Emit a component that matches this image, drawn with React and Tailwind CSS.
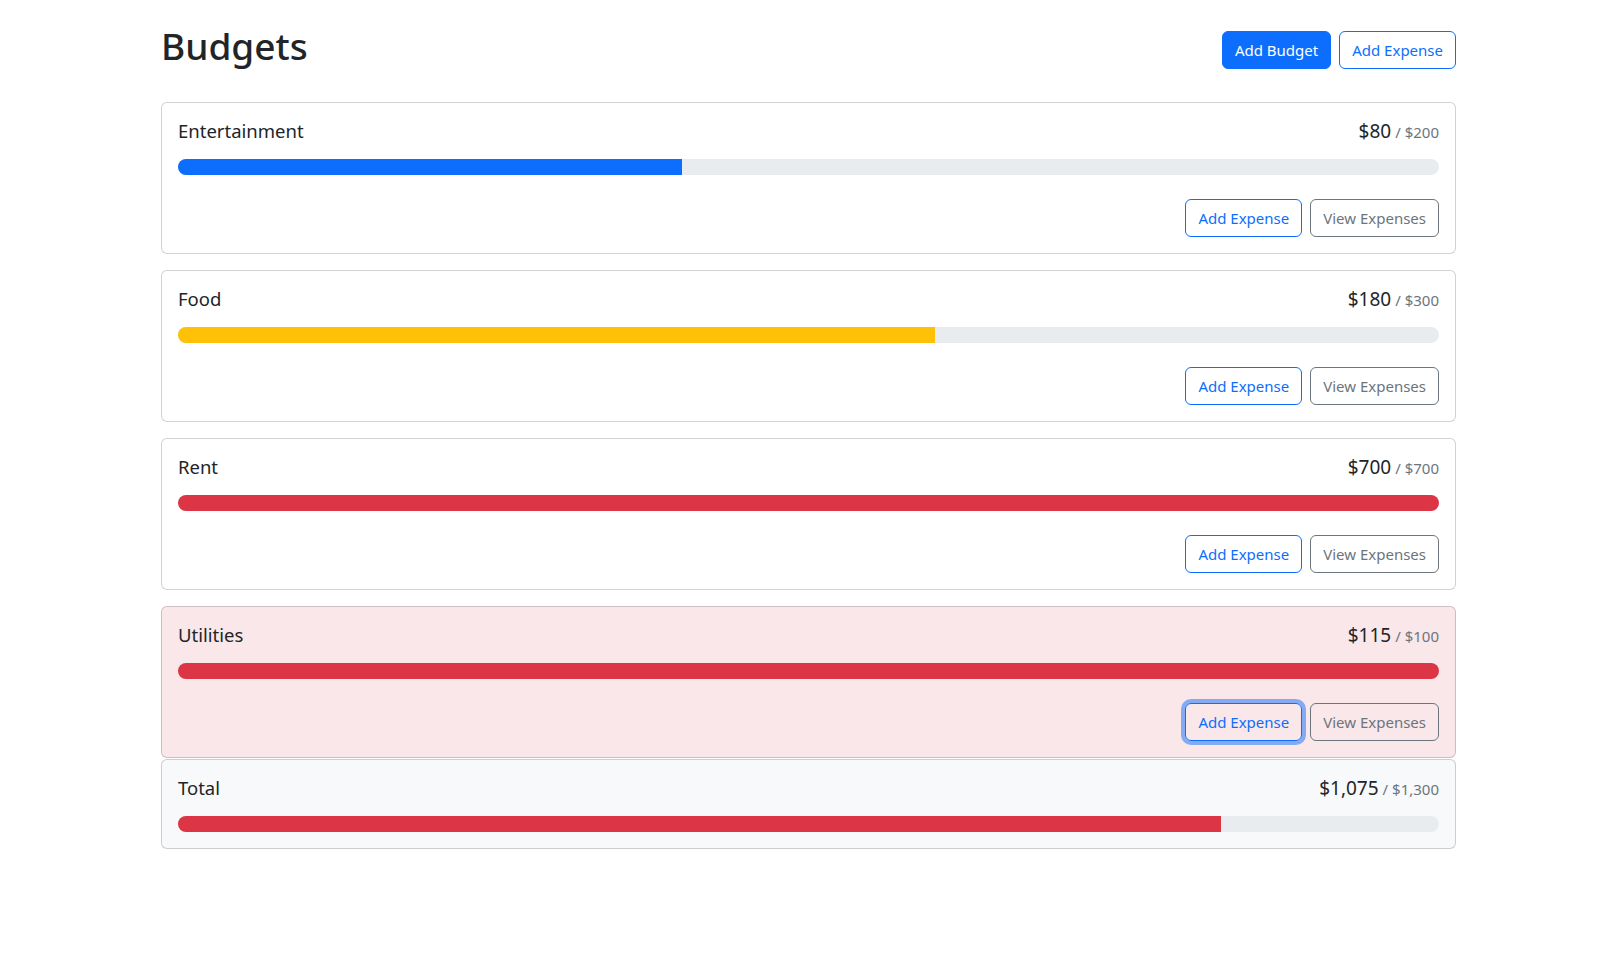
import React from "react";

const budgets = [
  { name: "Entertainment", spent: 80, max: 200 },
  { name: "Food", spent: 180, max: 300 },
  { name: "Rent", spent: 700, max: 700 },
  { name: "Utilities", spent: 115, max: 100 },
];

const fmt = (n) => "$" + n.toLocaleString("en-US");

function barColor(ratio) {
  if (ratio < 0.5) return "bg-[#0d6efd]";
  if (ratio < 0.75) return "bg-[#ffc107]";
  return "bg-[#dc3545]";
}

function BudgetCard({ name, spent, max, hideButtons, total, focused }) {
  const ratio = spent / max;
  const over = spent > max;
  return (
    <div
      className={
        "rounded-md border border-black/[0.175] " +
        (over ? "bg-[#f9e7e9] " : total ? "bg-[#f8f9fa] " : "bg-white ") +
        (total ? "" : over ? "mb-px" : "mb-4")
      }
    >
      <div className="p-4">
        <div className="flex h-6 items-baseline justify-between mb-4 leading-6 text-[#212529]">
          <span className="text-[18.5px]">{name}</span>
          <span className="text-[19px]">
            {fmt(spent)}
            <span className="ml-1 text-[15px] leading-none text-[#6c757d]">/ {fmt(max)}</span>
          </span>
        </div>
        <div className="h-4 w-full rounded-full bg-[#e9ecef] overflow-hidden flex">
          <div
            className={barColor(ratio) + " h-full"}
            style={{ width: Math.min(ratio, 1) * 100 + "%" }}
          />
        </div>
        {!hideButtons && (
          <div className="mt-6 flex justify-end gap-2">
            <button
              className={
                "px-3 py-1.5 text-[15px] leading-6 rounded-md border border-[#0d6efd] text-[#0d6efd] " +
                (focused ? "ring-4 ring-[#0d6efd]/50" : "")
              }
            >
              Add Expense
            </button>
            <button className="px-3 py-1.5 text-[15px] leading-6 rounded-md border border-[#6c757d] text-[#6c757d]">
              View Expenses
            </button>
          </div>
        )}
      </div>
    </div>
  );
}

export default function App() {
  const spent = budgets.reduce((a, b) => a + b.spent, 0);
  const max = budgets.reduce((a, b) => a + b.max, 0);
  return (
    <div
      className="min-h-screen bg-white text-[#212529]"
      style={{ fontFamily: '"Noto Sans", "Open Sans", sans-serif' }}
    >
      <div className="ml-[161px] w-[1295px] pt-[22px]">
        <div className="flex items-start justify-between mb-[32px]">
          <h1 className="text-[37px] leading-[48px] font-medium">Budgets</h1>
          <div className="flex gap-2 mt-[9px]">
            <button className="px-3 py-1.5 text-[15px] leading-6 rounded-md border border-[#0d6efd] bg-[#0d6efd] text-white">
              Add Budget
            </button>
            <button className="px-3 py-1.5 text-[15px] leading-6 rounded-md border border-[#0d6efd] text-[#0d6efd]">
              Add Expense
            </button>
          </div>
        </div>
        {budgets.map((b) => (
          <BudgetCard key={b.name} {...b} focused={b.name === "Utilities"} />
        ))}
        <BudgetCard name="Total" spent={spent} max={max} hideButtons total />
      </div>
    </div>
  );
}
